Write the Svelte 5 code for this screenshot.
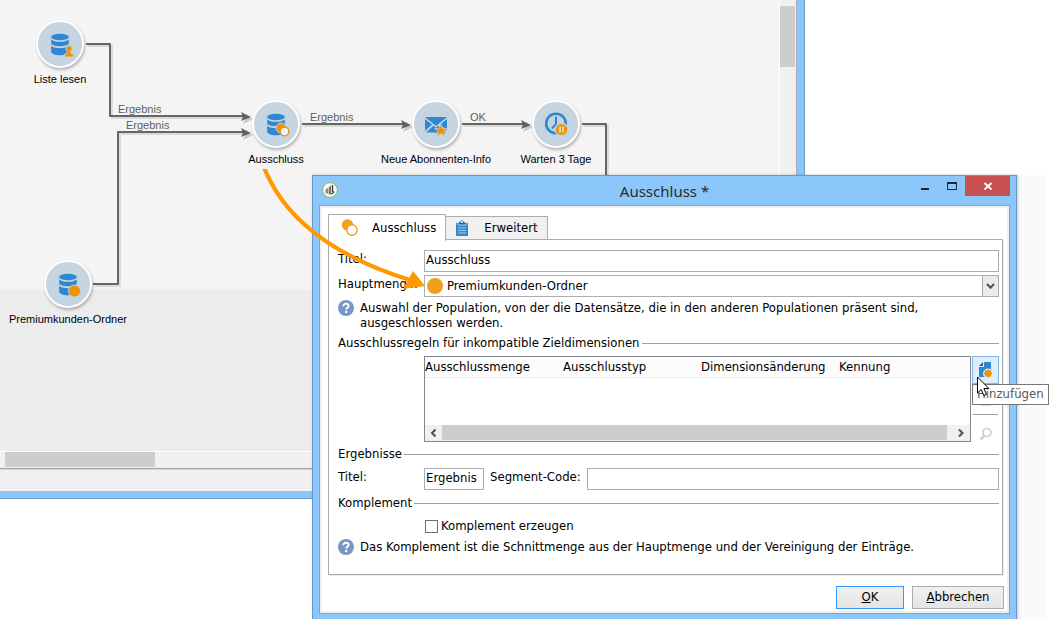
<script>
  const nodes = [
    { x: 60, y: 44, label: 'Liste lesen', icon: 'list' },
    { x: 276, y: 124, label: 'Ausschluss', icon: 'exclusion' },
    { x: 436, y: 124, label: 'Neue Abonnenten-Info', icon: 'mail' },
    { x: 556, y: 124, label: 'Warten 3 Tage', icon: 'wait' },
    { x: 68, y: 284, label: 'Premiumkunden-Ordner', icon: 'folder' }
  ];
  const links = ['M86 44H110V116H243', 'M93 284H118V132H243', 'M302 124H403', 'M462 124H523', 'M582 124H606V200'];
  const heads = [[251, 117], [251, 133], [411, 125], [531, 125]];
  const linkLabels = [
    { x: 118, y: 109, text: 'Ergebnis' },
    { x: 126, y: 125, text: 'Ergebnis' },
    { x: 310, y: 117, text: 'Ergebnis' },
    { x: 470, y: 117, text: 'OK' }
  ];
  const columns = ['Ausschlussmenge', 'Ausschlusstyp', 'Dimensionsänderung', 'Kennung'];

  let title = $state('Ausschluss');
  let mainSet = $state('Premiumkunden-Ordner');
  let resultTitle = $state('Ergebnis');
  let segmentCode = $state('');
  let complement = $state(false);
</script>

{#snippet help()}
  <svg class="help-icon" width="16" height="16" viewBox="0 0 16 16" aria-hidden="true">
    <circle cx="8" cy="8" r="8" fill="#7896c6" />
    <path d="M5.4 6.2C5.4 4.6 6.5 3.8 8 3.8S10.6 4.6 10.6 6C10.6 7.6 8.2 7.7 8.2 9.6" fill="none" stroke="#fff" stroke-width="1.9" />
    <circle cx="8.1" cy="12" r="1.2" fill="#fff" />
  </svg>
{/snippet}

<div class="desktop">
  <section class="workflow" aria-label="Workflow">
    <div class="canvas">
      <svg class="links" aria-hidden="true">
        <g fill="none" stroke="#dadada" stroke-width="2" transform="translate(2 2)">
          {#each links as d}<path {d} />{/each}
        </g>
        {#each heads as [x, y]}
          <path d="M{x + 2} {y + 2}l-10 -5l2 5l-2 5z" fill="#c9c9c9" />
        {/each}
        <g fill="none" stroke="#666" stroke-width="2">
          {#each links as d}<path {d} stroke-linejoin="round" />{/each}
        </g>
        {#each heads as [x, y]}
          <path d="M{x} {y}l-10 -5l2 5l-2 4z" fill="#606060" />
        {/each}
      </svg>
      {#each linkLabels as l}
        <span class="link-label" style="left:{l.x}px;top:{l.y}px">{l.text}</span>
      {/each}
      {#each nodes as n}
        <div class="node" style="left:{n.x}px;top:{n.y}px">
          <div class="disc">
            <svg width="44" height="44" viewBox="0 0 44 44" aria-hidden="true">
              {#if n.icon === 'mail'}
                <g fill="#2d87d3">
                  <path d="M11 15h22l-11 9z" />
                  <path d="M11 17l7 5.500l-7 6.500zM33 17l-7 5.500l7 6z" />
                  <path d="M12 30.500l7.500-6.800l2.500 2l2.500-2l7.500 6.800z" />
                </g>
                <path d="M27 22l1.800 4.300l4.700.3l-3.600 3l1.200 4.600l-4.100-2.500l-4.100 2.500l1.200-4.600l-3.600-3l4.700-.3z" fill="#ef9300" stroke="#c4d4e0" stroke-width=".7" />
              {:else if n.icon === 'wait'}
                <circle cx="22" cy="21.500" r="9.800" fill="none" stroke="#2d87d3" stroke-width="2.600" />
                <path d="M22 14.500v7.500l-4 4.500" fill="none" stroke="#2d87d3" stroke-width="2" />
                <circle cx="27.500" cy="27.500" r="6.300" fill="#ef9300" stroke="#c4d4e0" stroke-width="1.400" />
                <path d="M26 24.500v6M29 24.500v6" stroke="#f4ead8" stroke-width="1.400" />
              {:else}
                <g fill="#2d87d3">
                  <ellipse cx="22" cy="15" rx="8.800" ry="3.200" />
                  <path d="M13.200 17.300c2 3.400 15.600 3.400 17.600 0v4.200c-1.500 3.600-16.100 3.600-17.600 0z" />
                  <path d="M13.200 23.800c2 3.200 15.600 3.200 17.600 0v6.500c-1.500 4-16.100 4-17.600 0z" />
                </g>
                {#if n.icon === 'list'}
                  <path d="M31 23.500a3.200 3.200 0 0 1 1.700 5.800c0 2 .3 2.300 2.700 2.700v3H26.600v-3c2.400-.4 2.700-.7 2.700-2.700a3.200 3.200 0 0 1 1.700-5.800z" fill="#ef9300" stroke="#c4d4e0" stroke-width="1" />
                {:else if n.icon === 'exclusion'}
                  <circle cx="27" cy="26" r="5" fill="#ef9300" stroke="#c4d4e0" stroke-width="1" />
                  <circle cx="30.500" cy="29.500" r="4.300" fill="#f1f1f1" stroke="#ef9300" stroke-width="1.300" />
                {:else}
                  <circle cx="28.500" cy="29" r="6" fill="#ef9300" stroke="#c4d4e0" stroke-width="1" />
                {/if}
              {/if}
            </svg>
          </div>
          <span class="node-label">{n.label}</span>
        </div>
      {/each}
    </div>
    <div class="vscroll"><div class="vthumb"></div></div>
    <div class="hscroll"><div class="hthumb"></div></div>
    <div class="status"></div>
  </section>

  <div class="backdrop"></div>

  <div class="dialog" role="dialog" aria-labelledby="dialog-title">
    <header class="titlebar">
      <svg class="app-icon" width="16" height="16" viewBox="0 0 16 16" aria-hidden="true">
        <circle cx="8" cy="8" r="7.400" fill="#fbfbf5" stroke="#8ab648" stroke-width="1" />
        <path d="M3.500 7.500l3-2v6.500l-3-1z" fill="#8a8a8a" />
        <path d="M7 5l2-1.500v8.500l-2 .5z" fill="#777" />
        <path d="M10.500 3v6.500l2 1M9 12l2-1" fill="none" stroke="#333" stroke-width="1.300" />
      </svg>
      <h1 id="dialog-title">Ausschluss *</h1>
      <div class="window-buttons">
        <button type="button" aria-label="Minimieren">
          <svg width="10" height="10" viewBox="0 0 10 10"><path d="M1 7h8v2H1z" fill="#262626" /></svg>
        </button>
        <button type="button" aria-label="Maximieren">
          <svg width="10" height="10" viewBox="0 0 10 10"><path d="M0 1h10v8H0zM1 3v5h8V3z" fill="#262626" fill-rule="evenodd" /></svg>
        </button>
        <button type="button" class="close" aria-label="Schließen">
          <svg width="10" height="10" viewBox="0 0 10 10"><path d="M1.500 2l7 6.500M8.500 2l-7 6.500" stroke="#fff" stroke-width="1.800" /></svg>
        </button>
      </div>
    </header>

    <div class="content">
      <div class="tabs" role="tablist">
        <button type="button" role="tab" class="tab active" aria-selected="true">
          <svg width="18" height="18" viewBox="0 0 18 18" aria-hidden="true">
            <circle cx="6.500" cy="6" r="5.700" fill="#f0a020" />
            <circle cx="11" cy="11" r="5.200" fill="#fff" stroke="#f0a020" stroke-width="1.400" />
          </svg>
          Ausschluss
        </button>
        <button type="button" role="tab" class="tab" aria-selected="false">
          <svg width="18" height="18" viewBox="0 0 18 18" aria-hidden="true">
            <path d="M3 4h12v13H3z" fill="#2d87d3" />
            <path d="M5 3h2a2 2 0 0 1 4 0h2v3H5z" fill="#1769b3" stroke="#f0f0f0" stroke-width=".7" />
            <circle cx="9" cy="3" r="1" fill="#fff" />
            <path d="M5 9h8M5 11.500h8M5 14h8" stroke="#9fcbef" />
          </svg>
          Erweitert
        </button>
      </div>

      <div class="panel" role="tabpanel">
        <div class="row">
          <label for="title">Titel:</label>
          <input id="title" type="text" bind:value={title} />
        </div>
        <div class="row second">
          <label for="main-set">Hauptmenge:</label>
          <div class="combo">
            <span class="dot"></span>
            <select id="main-set" bind:value={mainSet}>
              <option>Premiumkunden-Ordner</option>
              <option>Liste lesen</option>
            </select>
            <span class="drop">
              <svg width="9" height="7" viewBox="0 0 9 7" aria-hidden="true"><path d="M1 1l3.500 3.700L8 1" fill="none" stroke="#505050" stroke-width="2" /></svg>
            </span>
          </div>
        </div>
        <div class="hint">
          {@render help()}
          <p>Auswahl der Population, von der die Datensätze, die in den anderen Populationen präsent sind, ausgeschlossen werden.</p>
        </div>

        <h2>Ausschlussregeln für inkompatible Zieldimensionen</h2>
        <div class="rules">
          <div class="grid">
            <table>
              <thead>
                <tr>{#each columns as c}<th scope="col">{c}</th>{/each}</tr>
              </thead>
              <tbody></tbody>
            </table>
            <div class="grid-scroll">
              <svg width="17" height="16" viewBox="0 0 17 16" aria-hidden="true"><path d="M10.500 4.500L7 8l3.500 3.500" fill="none" stroke="#505050" stroke-width="2" /></svg>
              <div class="grid-thumb"></div>
              <svg width="23" height="16" viewBox="0 0 23 16" aria-hidden="true"><path d="M12 4.500L15.500 8L12 11.500" fill="none" stroke="#505050" stroke-width="2" /></svg>
            </div>
          </div>
          <div class="tools">
            <button type="button" class="add" aria-label="Hinzufügen">
              <svg width="16" height="18" viewBox="0 0 16 18" aria-hidden="true">
                <path d="M6 1h7v15H1V6h5z" fill="#2d87d3" />
                <path d="M1 5l4-4v4z" fill="#1b64a8" />
                <circle cx="10" cy="12.500" r="5" fill="#d8ebfd" />
                <path d="M10 8l1.200 1.500l2-.4l-.2 2l1.600 1.400l-1.600 1.200l.2 2l-2-.4L10 17l-1.200-1.700l-2 .4l.2-2l-1.600-1.200L7 11.100l-.2-2l2 .4z" fill="#ef9300" />
              </svg>
            </button>
            <button type="button" class="remove" aria-label="Löschen" disabled>
              <svg width="10" height="22" viewBox="0 0 10 22" aria-hidden="true"><path d="M0 2h10v20H0z" fill="#d8d8d8" /></svg>
            </button>
            <hr />
            <button type="button" class="detail" aria-label="Detail" disabled>
              <svg width="14" height="14" viewBox="0 0 14 14" aria-hidden="true">
                <circle cx="8" cy="5.500" r="4" fill="none" stroke="#ccc" stroke-width="1.700" />
                <path d="M5.500 8.500L1.500 12.500" stroke="#ccc" stroke-width="2.400" />
              </svg>
            </button>
            <div class="tooltip" role="tooltip">Hinzufügen</div>
            <svg class="cursor" width="13" height="21" viewBox="0 0 13 21" aria-hidden="true">
              <path d="M.5 1v16l3.700-3.500l2.600 6l2.700-1.200l-2.600-5.800h5z" fill="#fff" stroke="#000" />
            </svg>
          </div>
        </div>

        <h2 class="results">Ergebnisse</h2>
        <div class="row">
          <label for="result-title">Titel:</label>
          <input id="result-title" class="short" type="text" bind:value={resultTitle} />
          <label class="inline" for="segment">Segment-Code:</label>
          <input id="segment" type="text" bind:value={segmentCode} />
        </div>

        <h2 class="complement">Komplement</h2>
        <label class="check"><input type="checkbox" bind:checked={complement} />Komplement erzeugen</label>
        <div class="hint">
          {@render help()}
          <p>Das Komplement ist die Schnittmenge aus der Hauptmenge und der Vereinigung der Einträge.</p>
        </div>
      </div>

      <footer>
        <button type="button" class="ok"><u>O</u>K</button>
        <button type="button" class="cancel"><u>A</u>bbrechen</button>
      </footer>
    </div>
  </div>

  <svg class="callout" width="180" height="130" viewBox="260 165 180 130" aria-hidden="true">
    <path d="M263 165C272 188 286 208 304 224C329 247 365 266 410 280" fill="none" stroke="#ff9900" stroke-width="4.200" />
    <path d="M413 271L425 286L403 289z" fill="#ff9900" />
  </svg>
</div>

<style>
  :global(body) { margin: 0; background: #fff; }
  * { box-sizing: border-box; }

  .desktop {
    position: relative;
    min-height: 100vh;
    overflow: hidden;
    color: #000;
    font: 13px/16px "DejaVu Sans Condensed", "Noto Sans", sans-serif;
  }
  button, input, select { font: inherit; color: inherit; margin: 0; border-radius: 0; }
  svg { display: block; flex: none; }

  .workflow {
    position: absolute;
    left: 0;
    top: 0;
    right: 250px;
    display: grid;
    grid-template-columns: 1fr 18px;
    grid-template-rows: 451px 17px 23px;
    background: #f0f0f0;
    border-style: solid;
    border-color: #8cc7fb;
    border-width: 0 7px 7px 0;
    box-shadow: inset -1px 0 #a8adb4;
    outline: 1px solid #6c9ac4;
    margin: 0 1px 0 0;
  }
  .canvas {
    position: relative;
    overflow: hidden;
    background: linear-gradient(#f4f4f4 290px, #ececec 290px);
  }
  .links { position: absolute; inset: 0; width: 100%; height: 100%; }
  .link-label, .node-label { font: 11px/14px "Liberation Sans", Arial, sans-serif; white-space: nowrap; }
  .link-label { position: absolute; transform: translateY(-50%); color: #606060; }
  .node {
    position: absolute;
    width: 48px;
    margin: -24px 0 0 -24px;
    display: flex;
    flex-direction: column;
    align-items: center;
    gap: 4px;
  }
  .disc {
    border: 2px solid #fff;
    border-radius: 50%;
    background: #c4d4e0;
    box-shadow: 1px 2px 3px #0004;
  }
  .vscroll { border-left: 1px solid #fff; padding-top: 6px; }
  .vthumb { width: 15px; height: 61px; background: #cdcdcd; }
  .hscroll { grid-column: 1 / 3; border-top: 1px solid #fff; padding-left: 5px; }
  .hthumb { width: 150px; height: 15px; background: #cdcdcd; }
  .status { grid-column: 1 / 3; border-top: 1px solid #a5a5a9; box-shadow: inset 0 1px #d4d4d4; margin-right: 1px; }

  .backdrop { position: absolute; right: 8px; top: 175px; bottom: 0; width: 30px; background: #fafafa; }

  .dialog {
    position: absolute;
    left: 312px;
    right: 38px;
    top: 175px;
    padding: 0 6px 7px;
    background: #8cc7fb;
    border: 1px solid #6797c2;
    box-shadow: 1px 0 3px #0003;
  }
  .titlebar { display: flex; height: 29px; align-items: flex-start; padding-left: 3px; }
  .app-icon { margin-top: 6px; }
  h1 { flex: 1; margin: 5px 0 0; padding-left: 80px; text-align: center; font: 15px/20px "Noto Sans", sans-serif; color: #2b2b2b; }
  .window-buttons { display: flex; }
  .window-buttons button {
    display: flex;
    align-items: center;
    justify-content: center;
    width: 27px;
    height: 20px;
    padding: 0;
    border: 0;
    background: none;
  }
  .window-buttons .close { width: 45px; background: #c75050; }

  .content { border: 1px solid #76a7d4; background: #fff; padding: 8px 5px 4px 8px; box-shadow: inset 0 0 0 2px #f0f0f0; }
  .tabs { display: flex; align-items: flex-end; height: 26px; }
  .tab {
    display: flex;
    align-items: center;
    gap: 13px;
    height: 24px;
    padding: 0 9px 0 7px;
    border: 1px solid #acacac;
    border-left: 0;
    background: #f0f0f0;
  }
  .tab.active {
    height: 27px;
    padding: 0 9px 0 12px;
    margin-bottom: -1px;
    border-left: 1px solid #acacac;
    border-bottom: 0;
    background: #fff;
    z-index: 1;
  }
  .panel { border: 1px solid #acacac; margin: -1px 1px 0 0; padding: 10px 3px 19px 9px; box-shadow: 1px 1px #eee; }
  .row { display: flex; align-items: flex-start; }
  .row label { flex: none; width: 86px; padding-top: 1px; }
  .row .inline { width: auto; margin: 0 6px; }
  .row input { flex: 1; min-width: 0; height: 22px; padding: 0 1px 3px; border: 1px solid #abadb3; background: #fff; }
  .row .short { flex: 0 0 60px; }
  .second { margin-top: 3px; }
  .combo { flex: 1; display: flex; align-items: center; height: 22px; border: 1px solid #abadb3; }
  .dot { flex: none; width: 16px; height: 16px; margin: 0 4px 0 2px; border-radius: 50%; background: #f0a020; }
  select { flex: 1; min-width: 0; height: 20px; border: 0; padding: 0; appearance: none; background: none; }
  .drop {
    display: flex;
    align-items: center;
    justify-content: center;
    width: 16px;
    height: 20px;
    border-left: 1px solid #abadb3;
    background: #ebebeb;
    pointer-events: none;
  }
  .hint { display: flex; gap: 6px; margin-top: 3px; }
  .hint p { margin: 0; line-height: 15px; max-width: 570px; }
  h2 { display: flex; align-items: center; gap: 2px; margin: 5px 0; font: inherit; }
  h2::after { content: ""; flex: 1; height: 1px; background: #a0a0a0; }
  .rules { display: flex; margin-left: 86px; gap: 1px; }
  .grid { flex: 1; min-width: 0; height: 86px; border: 1px solid #828790; display: flex; flex-direction: column; justify-content: space-between; }
  table { border-collapse: collapse; table-layout: fixed; width: 100%; }
  tr { background: #fcfcfd; border-bottom: 1px solid #e8f1f8; }
  th { width: 138px; height: 20px; padding: 0; text-align: left; font-weight: normal; }
  th:last-child { width: auto; }
  .grid-scroll { display: flex; height: 16px; background: #f0f0f0; }
  .grid-thumb { flex: 1; height: 15px; background: #cdcdcd; }
  .tools { position: relative; display: flex; flex-direction: column; align-items: center; width: 27px; }
  .tools button { display: flex; align-items: center; justify-content: center; padding: 0; border: 0; background: none; width: 27px; }
  .tools .add { height: 28px; border: 1px solid #7eb4ea; background: #deeefd; }
  .remove { height: 22px; }
  hr { width: 25px; height: 1px; margin: 8px 0 12px; border: 0; background: #a0a0a0; }
  .tooltip {
    position: absolute;
    left: 0;
    top: 28px;
    height: 21px;
    padding: 1px 4px;
    border: 1px solid #767676;
    background: #fff;
    color: #575757;
  }
  .cursor { position: absolute; left: 5px; top: 20px; }
  .results { margin: 4px 0 6px; }
  .check { display: flex; align-items: center; gap: 3px; margin: 7px 0 5px 87px; width: max-content; }
  .check input { appearance: none; width: 13px; height: 13px; border: 1px solid #707070; background: #fff; }
  .check input:checked { background: #707070; }
  footer { display: flex; justify-content: flex-end; gap: 8px; margin-top: 11px; }
  footer button { height: 23px; padding: 0 0 2px; border: 1px solid #acacac; background: linear-gradient(#f0f0f0, #e5e5e5); }
  footer .ok { width: 68px; border-color: #3399ff; }
  .cancel { width: 92px; }
  .callout { position: absolute; left: 260px; top: 165px; clip-path: inset(4px 0 0); }
</style>
